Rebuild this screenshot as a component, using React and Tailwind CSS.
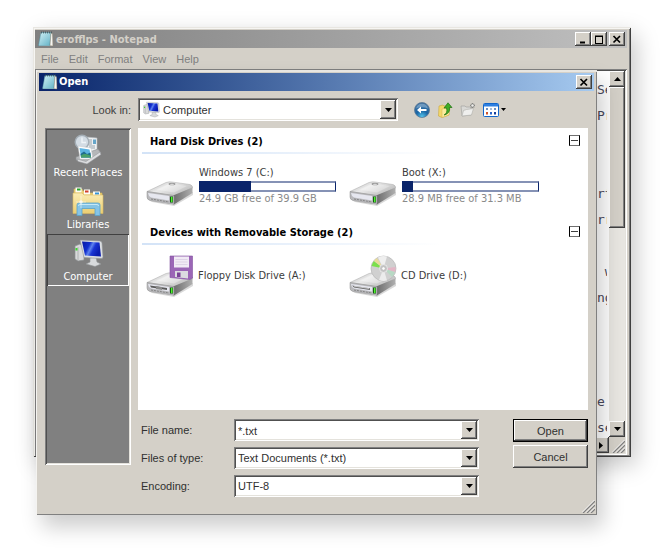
import React, { useState } from "react";

const raised =
  "bg-[#d4d0c8] shadow-[inset_-1px_-1px_#404040,inset_1px_1px_#ffffff,inset_-2px_-2px_#808080]";
const sunken =
  "shadow-[inset_1px_1px_#808080,inset_-1px_-1px_#ffffff,inset_2px_2px_#505050,inset_-2px_-2px_#e4e2dc]";

const editorText = [
  "Se", "Pr", "", "", "rt", "rr", "", " w", "ng", "", "", "", "e:", "se",
].join("\n");

const NotepadIcon = () => (
  <svg className="h-4 w-4 shrink-0" viewBox="0 0 16 16" aria-hidden="true">
    <defs>
      <linearGradient id="pad" x1="0" y1="0" x2="1" y2="1">
        <stop offset="0" stopColor="#d2f1f6" />
        <stop offset="1" stopColor="#62b2c6" />
      </linearGradient>
    </defs>
    <path d="M3 2 L14 2 L15 15 L1 15 Z" fill="#e9eef0" />
    <path d="M3 1.500 L13 1.500 L12 14.500 L0.500 14.500 Z" fill="url(#pad)" stroke="#4b8ea1" strokeWidth="0.500" />
    <path d="M13 1.500 L14.500 3 L14.800 15 L12 14.500 Z" fill="#f7f7f4" stroke="#8a7f68" strokeWidth="0.500" />
    <path d="M3.500 0.500v2M5.500 0.500v2M7.500 0.500v2M9.500 0.500v2M11.500 0.500v2M13.500 0.500v2" stroke="#3a4a50" strokeWidth="0.700" />
  </svg>
);

const DriveBody = () => (
  <g>
    <defs>
      <linearGradient id="driveTop" x1="0" y1="0" x2="1" y2="0.600">
        <stop offset="0" stopColor="#b4b4b4" />
        <stop offset="0.450" stopColor="#ebebeb" />
        <stop offset="1" stopColor="#bcbcbc" />
      </linearGradient>
      <linearGradient id="driveSide" x1="0" y1="0" x2="1" y2="0">
        <stop offset="0" stopColor="#6a6a6a" />
        <stop offset="1" stopColor="#b0b0b0" />
      </linearGradient>
    </defs>
    <path d="M3 20 L27 25 L47 12 L47 15 L28 26 L6 22 Z" fill="#000" opacity="0.150" />
    <path d="M1 11.500 L20 2.500 Q23 1.500 26 2 L44 4.500 Q47 5.500 46.500 8 L28.500 16 Z" fill="url(#driveTop)" stroke="#ababab" strokeWidth="0.500" />
    <path d="M46.500 7.500 L46.500 13 L28 24.500 L27 15.500 Z" fill="url(#driveSide)" />
    <path d="M1 11.500 L28 15.500 L28 24.500 L4 20.500 Q1 19.500 1 17 Z" fill="#b9b9bc" stroke="#8d8d8d" strokeWidth="0.500" />
    <path d="M2 13 L23 16 L23 20.500 L5 17.500 Q2.500 16.500 2 13 Z" fill="#e6e7ef" />
    <path d="M5 19 L23 22" stroke="#858585" strokeWidth="1" strokeDasharray="2 1" />
    <path d="M10 9.500 L24 3.500 L41 6 L28 12.500 Z" fill="#fff" opacity="0.300" />
    <rect x="24" y="16.500" width="3" height="6" fill="#155a12" />
    <rect x="25" y="17" width="1.500" height="5" fill="#4df02c" />
  </g>
);

const HardDiskIcon = () => (
  <svg className="h-[26px] w-12 shrink-0" viewBox="0 0 48 26" aria-hidden="true">
    <DriveBody />
    <ellipse cx="26" cy="4" rx="3.500" ry="1.300" fill="#9d9d9d" />
    <ellipse cx="26" cy="4.500" rx="2" ry="0.700" fill="#d5d5d5" />
  </svg>
);

const FloppyDriveIcon = () => (
  <svg className="h-[42px] w-12 shrink-0" viewBox="0 0 48 42" aria-hidden="true">
    <g transform="translate(0 16)">
      <DriveBody />
      <path d="M4 14.500 L21 17 L21 19 L5 16.500 Z" fill="#5a5a5a" />
      <path d="M10 15 L16 16 L16 19 L10 18 Z" fill="#8a8a8a" />
    </g>
    <path d="M24 1 L46.500 1 L46.500 23 L44 24.500 L24 22.500 Z" fill="#9b66b6" stroke="#8150a0" strokeWidth="0.600" />
    <path d="M28 1.500h15v11H28z" fill="#f1eaf5" />
    <path d="M29.500 4.500h12M29.500 7h12M29.500 9.500h12" stroke="#d6c8e0" strokeWidth="0.700" />
    <path d="M29 16h13v7.500l-13 -1.500z" fill="#dcdce0" />
    <path d="M31 17.500h3.500v4.500h-3.500z" fill="#7a4497" />
  </svg>
);

const CdDriveIcon = () => (
  <svg className="h-[42px] w-12 shrink-0" viewBox="0 0 48 42" aria-hidden="true">
    <g transform="translate(0 16)">
      <DriveBody />
      <path d="M3 14.500 L21 17.200 L21 19 L5 16.500 Z" fill="#666" />
      <path d="M5 15.200 L20 17.500" stroke="#fff" strokeWidth="0.600" />
    </g>
    <circle cx="34.500" cy="13.500" r="12.500" fill="#d0d0d0" stroke="#b0b0b0" strokeWidth="0.600" />
    <path d="M34.500 13.500 L22.500 11 A12.500 12.500 0 0 1 25 6 Z" fill="#7be04c" />
    <path d="M34.500 13.500 L25 6 A12.500 12.500 0 0 1 28 3 Z" fill="#e8dc9a" />
    <path d="M34.500 13.500 L29 2.500 A12.500 12.500 0 0 1 38 1.500 Z" fill="#efefef" />
    <path d="M34.500 13.500 L46.500 12 A12.500 12.500 0 0 1 46 17 Z" fill="#e3b6c6" />
    <path d="M34.500 13.500 L46 17 A12.500 12.500 0 0 1 43 22 Z" fill="#b8d9c4" />
    <path d="M34.500 13.500 L30 25 A12.500 12.500 0 0 0 38 25.500 Z" fill="#ececec" />
    <circle cx="34.500" cy="13.500" r="4" fill="#c6c6c6" stroke="#eee" strokeWidth="0.800" />
    <circle cx="34.500" cy="13.500" r="1.700" fill="#fff" stroke="#aaa" strokeWidth="0.500" />
  </svg>
);

const RecentIcon = () => (
  <svg className="h-8 w-8" viewBox="0 0 32 32" aria-hidden="true">
    <path d="M14 3 L25 4 L25 20 L13 20 Z" fill="#eef1f3" stroke="#b3b9bd" strokeWidth="0.600" />
    <path d="M17 6h3M17 8h3M17 10h3M17 12h6M17 14h6" stroke="#9aa5ad" strokeWidth="1" />
    <path d="M21 5.500h3v4.500H21z" fill="#65a5c9" />
    <circle cx="10" cy="8" r="6.800" fill="#d3dce4" stroke="#a3adb5" strokeWidth="1.400" />
    <path d="M10 3.500V8.500H14" stroke="#eef4f8" strokeWidth="1.400" fill="none" />
    <path d="M4 23 L26 15 L29 19 L14 29 L4 26 Z" fill="#b5b7b9" stroke="#898d90" strokeWidth="0.600" />
    <path d="M6 12 L19 14 L21 25 L8 25 Z" fill="#fff" stroke="#c0c6ca" strokeWidth="0.500" />
    <path d="M7.500 14 L17.500 15.500 L19 23.500 L9 23.500 Z" fill="#5cb3e2" />
    <path d="M8.500 20 L12 17.500 L15 20 L18.500 18.500 L19 23.500 L9 23.500 Z" fill="#1e6d8f" />
    <path d="M9 21.500 Q13 18.500 19 22 L19 23.500 L9 23.500 Z" fill="#48a06a" />
    <path d="M5 25 L14 27.500 L28 18 L29 20.500 L15 30 L6 27.500 Z" fill="#dcdddf" stroke="#8f9396" strokeWidth="0.500" />
  </svg>
);

const LibrariesIcon = () => (
  <svg className="h-8 w-8" viewBox="0 0 32 32" aria-hidden="true">
    <defs>
      <linearGradient id="folder" x1="0" y1="0" x2="0" y2="1">
        <stop offset="0" stopColor="#faedb5" />
        <stop offset="1" stopColor="#ecce72" />
      </linearGradient>
    </defs>
    <path d="M2 3h8l1 2h6l1 2h12v18H2z" fill="#eccf75" stroke="#d2b258" strokeWidth="0.600" />
    <path d="M3.500 1.500h6v5h-6z M12 3.500h6v5h-6z M21 5.500h7v4h-7z" fill="#fdfdf6" />
    <path d="M5 2.500h3.500v2H5z" fill="#2ba52f" />
    <path d="M13 4.500h3.500v2H13z" fill="#d1402c" />
    <path d="M23 6.500h4v2h-4z" fill="#3393d8" />
    <path d="M1 7h9l2 2h19v18.500H1z" fill="url(#folder)" stroke="#d9b960" strokeWidth="0.600" />
    <path d="M5 29.500V19q0 -2 2 -2h19q2 0 2 2v10.500h-5v-7H10v7z" fill="#86c4e6" stroke="#5ba3c9" strokeWidth="0.800" />
    <path d="M6.500 20q0 -1.500 1.500 -1.500h17q1.500 0 1.500 1.500" stroke="#c5e9f8" strokeWidth="1" fill="none" />
    <path d="M9 10v12M4 16h10" stroke="#fff" strokeWidth="0.700" opacity="0.700" />
    <circle cx="9" cy="16" r="1.800" fill="#fff" opacity="0.700" />
  </svg>
);

const ComputerIcon = ({ className }) => (
  <svg className={className} viewBox="0 0 32 32" aria-hidden="true">
    <defs>
      <linearGradient id="screen" x1="0" y1="0" x2="1" y2="0.400">
        <stop offset="0" stopColor="#0619a0" />
        <stop offset="0.400" stopColor="#1230cf" />
        <stop offset="0.550" stopColor="#5f83ee" />
        <stop offset="0.700" stopColor="#1a35d4" />
        <stop offset="1" stopColor="#0a1cae" />
      </linearGradient>
    </defs>
    <path d="M3 8 L8 6 L12 8 L12 22 L6 23 L3 21 Z" fill="#d9dadb" stroke="#8d9092" strokeWidth="0.700" />
    <path d="M6 9 V22" stroke="#9fa2a4" strokeWidth="0.700" />
    <rect x="3.500" y="10" width="2" height="2.500" fill="#3fd531" />
    <path d="M18 20 L24 19 L25 24 L29 26 L23 28.500 L14 26 L18 24 Z" fill="#d8dadc" stroke="#8f9294" strokeWidth="0.600" />
    <path d="M8 2 L28 3 Q30 3.500 30 5 L31 19 Q31 20.500 29 20.500 L12 19.500 Z" fill="#dcdfe2" stroke="#909396" strokeWidth="0.600" />
    <path d="M10 3.500 L27.500 4.500 L29 18.500 L13 17.500 Z" fill="url(#screen)" />
  </svg>
);

const ComboArrow = () => (
  <span
    className={`${raised} pointer-events-none absolute top-[2px] right-[2px] bottom-[2px] flex w-4 items-center justify-center`}
  >
    <svg className="h-1 w-[7px]" viewBox="0 0 7 4" aria-hidden="true">
      <path d="M0 0h7L3.500 4z" fill="#000" />
    </svg>
  </span>
);

const CaptionButton = ({ label, children }) => (
  <button aria-label={label} className={`${raised} flex h-[14px] w-4 items-center justify-center`}>
    <svg className="h-[9px] w-[10px]" viewBox="0 0 10 9" fill="none" stroke="#000" aria-hidden="true">
      {children}
    </svg>
  </button>
);

const CloseGlyph = () => <path d="M1.500 1 L8 7.500 M8 1 L1.500 7.500" strokeWidth="1.700" />;

const ResizeGrip = () => (
  <svg className="h-[13px] w-[13px]" viewBox="0 0 13 13" aria-hidden="true">
    <path d="M1 13L13 1M5 13L13 5M9 13L13 9" stroke="#808080" strokeWidth="1.300" />
    <path d="M0 12.500L12.500 0M4 12.500L13 3.500M8 12.500L13 7.500" stroke="#fff" strokeWidth="0.800" />
  </svg>
);

const Section = ({ title, children }) => (
  <section>
    <div className="flex justify-between pr-1 pl-3">
      <h2 className="leading-[18px] font-bold text-black">{title}</h2>
      <button
        aria-label={`Collapse ${title}`}
        className="mt-[2px] flex h-[11px] w-[11px] items-center justify-center border border-x-black border-y-[#707070]"
      >
        <span className="h-px w-[7px] bg-[#404040]"></span>
      </button>
    </div>
    <div className="mt-px ml-1 h-[2px] w-[300px] bg-linear-to-r from-[#d3e3f7] to-white"></div>
    {children}
  </section>
);

const Drive = ({ name, used, free }) => (
  <div className="flex w-[203px] shrink-0 items-end gap-[5px]">
    <HardDiskIcon />
    <div className="leading-[14px]">
      <div>{name}</div>
      <div
        role="progressbar"
        aria-label={`${name} space used`}
        aria-valuenow={used}
        className="mt-px h-[11px] w-[137px] border-y-2 border-r border-y-[#8592b5] border-r-[#0a246a] bg-white"
      >
        <div className="-my-[2px] h-[11px] bg-[#0a246a]" style={{ width: `${used}%` }}></div>
      </div>
      <div className="whitespace-nowrap text-[#8a8a8a]">{free}</div>
    </div>
  </div>
);

const places = [
  { name: "Recent Places", icon: <RecentIcon /> },
  { name: "Libraries", icon: <LibrariesIcon /> },
  { name: "Computer", icon: <ComputerIcon className="h-8 w-8" /> },
];

const NotepadWindow = () => (
  <div className="bg-[#d4d0c8] pt-[3px] pr-1 pb-[2px] pl-[2px] shadow-[inset_1px_1px_#e8e6e1,inset_-1px_-1px_#404040,inset_2px_2px_#f6f5f2,inset_-2px_-2px_#808080,5px_8px_22px_rgba(0,0,0,0.22)]">
    <div className="flex h-[18px] items-center bg-linear-to-r from-[#808080] to-[#c0c0c0] pr-[2px] pl-[3px]">
      <NotepadIcon />
      <h1 className="ml-[2px] flex-1 pt-[2px] font-bold text-[#d4d0c8]">erofflps - Notepad</h1>
      <CaptionButton label="Minimize">
        <path d="M2 7.500h5" strokeWidth="2" />
      </CaptionButton>
      <CaptionButton label="Maximize">
        <path d="M1 1h8M1.500 1v7.500M8.500 1v7.500M1 8.500h8" />
        <path d="M1 1.500h8" />
      </CaptionButton>
      <span className="w-[2px]"></span>
      <CaptionButton label="Close">
        <CloseGlyph />
      </CaptionButton>
    </div>
    <nav className="flex h-[21px] items-center gap-[10px] pl-[6px] font-['Liberation_Sans',sans-serif] text-[#808080]">
      {["File", "Edit", "Format", "View", "Help"].map((item) => (
        <button key={item}>{item}</button>
      ))}
    </nav>
    <div className={`${sunken} bg-white p-[2px]`}>
      <div className="flex h-[366px]">
        <textarea
          aria-label="Document text"
          wrap="off"
          readOnly
          value={editorText}
          className="mr-[2px] block h-full min-w-0 flex-1 resize-none overflow-hidden bg-white pt-[6px] pl-[calc(100%-28px)] font-['DejaVu_Sans_Mono',monospace] text-[13px] leading-[26px] whitespace-pre text-[#4a4a5c] outline-none"
        />
        <div className="flex w-4 flex-col bg-[#e8e6e1]">
          <button aria-label="Scroll up" className={`${raised} flex h-4 items-center justify-center`}>
            <svg className="h-1 w-[7px]" viewBox="0 0 7 4" aria-hidden="true">
              <path d="M0 4h7L3.500 0z" />
            </svg>
          </button>
          <div className={`${raised} h-[141px]`}></div>
          <button aria-label="Scroll down" className={`${raised} mt-auto flex h-4 items-center justify-center`}>
            <svg className="h-1 w-[7px]" viewBox="0 0 7 4" aria-hidden="true">
              <path d="M0 0h7L3.500 4z" />
            </svg>
          </button>
        </div>
      </div>
      <div className="flex h-4 items-end justify-end bg-[#d4d0c8]">
        <button aria-label="Scroll right" className={`${raised} flex h-4 w-4 items-center justify-center`}>
          <svg className="h-[7px] w-1" viewBox="0 0 4 7" aria-hidden="true">
            <path d="M0 0v7L4 3.500z" />
          </svg>
        </button>
        <span className="flex w-4 justify-end">
          <ResizeGrip />
        </span>
      </div>
    </div>
  </div>
);

const OpenDialog = () => {
  const [place, setPlace] = useState("Computer");
  const [fileName, setFileName] = useState("*.txt");

  return (
    <div
      role="dialog"
      aria-label="Open"
      className="absolute top-[70px] right-[68px] left-[36px] bg-[#d4d0c8] p-[3px] shadow-[inset_1px_0_#f4f3f0,inset_0_2px_#e8e6e1,inset_-1px_-1px_#808080,6px_12px_20px_rgba(0,0,0,0.20)]"
    >
      <div className="flex h-[18px] items-center bg-linear-to-r from-[#0a246a] to-[#a6caf0] pr-[2px] pl-[3px]">
        <NotepadIcon />
        <h1 className="ml-px flex-1 font-bold text-white">Open</h1>
        <CaptionButton label="Close">
          <CloseGlyph />
        </CaptionButton>
      </div>

      <div className="flex h-[37px] items-center px-[6px]">
        <label htmlFor="look-in" className="w-[86px] text-right font-['Liberation_Sans',sans-serif] text-[#404040]">
          Look in:
        </label>
        <div className={`${sunken} relative ml-[7px] h-[23px] w-[260px] bg-white`}>
          <ComputerIcon className="pointer-events-none absolute top-[3px] left-1 h-[18px] w-[18px]" />
          <select id="look-in" className="h-full w-full appearance-none bg-transparent pr-5 pl-[25px] font-['Liberation_Sans',sans-serif] text-[#303030] outline-none">
            <option>Computer</option>
          </select>
          <ComboArrow />
        </div>
        <div className="ml-4 flex items-center gap-[7px]">
          <button aria-label="Back">
            <svg className="h-4 w-4" viewBox="0 0 16 16" aria-hidden="true">
              <defs>
                <radialGradient id="back" cx="0.500" cy="0.950" r="0.900">
                  <stop offset="0" stopColor="#56c8ee" />
                  <stop offset="0.450" stopColor="#1b66a5" />
                  <stop offset="1" stopColor="#3f6f9e" />
                </radialGradient>
              </defs>
              <circle cx="8" cy="8" r="7.500" fill="url(#back)" stroke="#5b7896" strokeWidth="0.800" />
              <path d="M2 6.500a6.200 6.200 0 0 1 12 0q-6 -2.500 -12 0z" fill="#b4d0e6" opacity="0.450" />
              <path d="M3 8l4 -3.500v2.500h5.500v2H7V11.500z" fill="#fff" />
            </svg>
          </button>
          <button aria-label="Up one level">
            <svg className="h-4 w-4" viewBox="0 0 16 16" aria-hidden="true">
              <path d="M2 4l4 -1l1 1h5v9l-7 2.500l-3.500 -1.500z" fill="#f3d86b" stroke="#c9a640" strokeWidth="0.600" />
              <path d="M5 7l8 -2l-1 8l-7 2.500z" fill="#fbeb9c" stroke="#d1b250" strokeWidth="0.500" />
              <path d="M7 13q4 -2 2.500 -7H7L11 0.800L15 5.500h-2.500q1 6 -5.500 7.500z" fill="#3fae27" stroke="#1f7011" strokeWidth="0.700" />
            </svg>
          </button>
          <button aria-label="Create new folder">
            <svg className="h-4 w-4" viewBox="0 0 16 16" aria-hidden="true">
              <path d="M1 4h4l1 1h5v8l-9 1z" fill="#d9d9d6" stroke="#a5a5a1" strokeWidth="0.700" />
              <path d="M3.500 8.500l3 -1l7 -1l-2 6.500l-9.500 1z" fill="#efefed" stroke="#aeaeaa" strokeWidth="0.600" />
              <path d="M12.500 1v5M10 3.500h5M10.800 1.800l3.500 3.500M14.300 1.800l-3.500 3.500" stroke="#858582" strokeWidth="1.200" />
              <circle cx="12.500" cy="3.500" r="1.200" fill="#efefed" />
            </svg>
          </button>
          <button aria-label="View menu" className="flex items-center gap-[2px]">
            <svg className="h-4 w-4" viewBox="0 0 16 16" aria-hidden="true">
              <rect x="0.500" y="1.500" width="15" height="13" rx="1" fill="#fff" stroke="#1166cc" />
              <path d="M1 2h14v2.500H1z" fill="#2e7fe0" />
              <path d="M3 6h2v2H3zM11 6h2v2h-2z" fill="#6d8fc0" />
              <path d="M7 6h2v2H7z" fill="#a7bcd8" />
              <path d="M3 10h2v2.500H3z" fill="#d0542c" />
              <path d="M7 10h2v2.500H7z" fill="#2a66cc" />
              <path d="M11 10h2v2.500h-2z" fill="#173f9a" />
            </svg>
            <svg className="h-[3px] w-[5px]" viewBox="0 0 5 3" aria-hidden="true">
              <path d="M0 0h5L2.500 3z" />
            </svg>
          </button>
        </div>
      </div>

      <div className="flex items-start px-[6px] pb-[15px]">
        <nav className={`${sunken} flex h-[337px] w-[86px] shrink-0 flex-col bg-[#808080] p-[2px]`}>
          {places.map(({ name, icon }) => (
            <button
              key={name}
              onClick={() => setPlace(name)}
              className={`flex h-[52px] flex-col items-center pt-1 leading-[14px] text-white ${
                place === name ? "shadow-[inset_1px_1px_#404040,inset_-1px_-1px_#ffffff]" : ""
              }`}
            >
              {icon}
              {name}
            </button>
          ))}
        </nav>

        <div className="ml-[7px] min-w-0 flex-1">
          <div className="h-[282px] overflow-hidden bg-white pt-[5px] pr-1 text-[#3c3c3c]">
            <Section title="Hard Disk Drives (2)">
              <div className="mt-3 flex pl-2">
                <Drive name="Windows 7 (C:)" used={38} free="24.9 GB free of 39.9 GB" />
                <Drive name="Boot (X:)" used={8} free="28.9 MB free of 31.3 MB" />
              </div>
            </Section>
            <div className="mt-[18px]">
              <Section title="Devices with Removable Storage (2)">
                <div className="mt-[10px] flex pl-2">
                  <div className="flex w-[203px] shrink-0 items-center gap-1">
                    <FloppyDriveIcon />
                    Floppy Disk Drive (A:)
                  </div>
                  <div className="flex w-[203px] shrink-0 items-center gap-1">
                    <CdDriveIcon />
                    CD Drive (D:)
                  </div>
                </div>
              </Section>
            </div>
          </div>

          <div className="flex pt-[9px] font-['Liberation_Sans',sans-serif] text-[#303030]">
            <div className="flex min-w-0 flex-1 flex-col gap-[6px]">
              <div className="flex h-[22px] items-center">
                <label htmlFor="file-name" className="w-24 shrink-0 pl-[3px]">File name:</label>
                <div className={`${sunken} relative h-full flex-1 bg-white`}>
                  <input
                    id="file-name"
                    value={fileName}
                    onChange={(e) => setFileName(e.target.value)}
                    className="h-full w-full bg-transparent pt-[2px] pr-5 pl-1 outline-none"
                  />
                  <ComboArrow />
                </div>
              </div>
              <div className="flex h-[22px] items-center">
                <label htmlFor="file-type" className="w-24 shrink-0 pl-[3px]">Files of type:</label>
                <div className={`${sunken} relative h-full flex-1 bg-white`}>
                  <select id="file-type" className="h-full w-full appearance-none bg-transparent pr-5 pl-1 outline-none">
                    <option>Text Documents (*.txt)</option>
                  </select>
                  <ComboArrow />
                </div>
              </div>
              <div className="flex h-[22px] items-center">
                <label htmlFor="encoding" className="w-24 shrink-0 pl-[3px]">Encoding:</label>
                <div className={`${sunken} relative h-full flex-1 bg-white`}>
                  <select id="encoding" className="h-full w-full appearance-none bg-transparent pr-5 pl-1 outline-none">
                    <option>UTF-8</option>
                  </select>
                  <ComboArrow />
                </div>
              </div>
            </div>
            <div className="ml-[34px] flex w-[75px] flex-col gap-[3px]">
              <button className="h-[23px] bg-[#d4d0c8] shadow-[inset_0_0_0_1px_#000000,inset_-2px_-2px_#404040,inset_2px_2px_#ffffff,inset_-3px_-3px_#808080]">
                Open
              </button>
              <button className={`${raised} h-[23px]`}>Cancel</button>
            </div>
          </div>
        </div>
      </div>
      <span className="absolute right-[2px] bottom-[2px]">
        <ResizeGrip />
      </span>
    </div>
  );
};

const App = () => {
  return (
    <div className="relative min-h-screen overflow-hidden bg-white pt-[27px] pr-[34px] pb-8 pl-[33px] font-['DejaVu_Sans_Condensed','DejaVu_Sans',sans-serif] text-[11px] leading-4">
      <NotepadWindow />
      <OpenDialog />
    </div>
  );
};

export default App;
